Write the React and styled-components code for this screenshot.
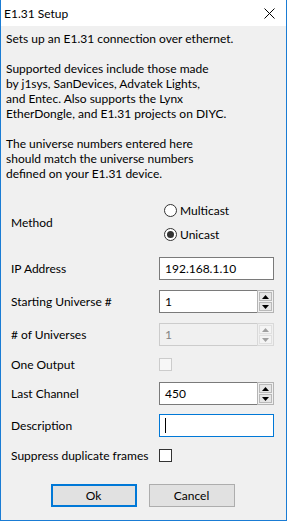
import React from "react";
import styled, { createGlobalStyle } from "styled-components";

const GlobalStyle = createGlobalStyle`
  html, body {
    margin: 0;
    padding: 0;
    background: #fff;
  }
`;

const App = () => {
  return (
    <>
      <GlobalStyle />
      <Window>
        <TitleBar>
          <Title>E1.31 Setup</Title>
          <CloseIcon width="11" height="11" viewBox="0 0 11 11">
            <path d="M0.5 0.5 L10.5 10.5 M10.5 0.5 L0.5 10.5" stroke="#000" strokeWidth="1" />
          </CloseIcon>
        </TitleBar>
        <Body>
          <Intro>
            <p>Sets up an E1.31 connection over ethernet.</p>
            <p>
              Supported devices include those made
              <br />
              by j1sys, SanDevices, Advatek Lights,
              <br />
              and Entec. Also supports the Lynx
              <br />
              EtherDongle, and E1.31 projects on DIYC.
            </p>
            <p>
              The universe numbers entered here
              <br />
              should match the universe numbers
              <br />
              defined on your E1.31 device.
            </p>
          </Intro>
          <Form>
            <MethodRow>
              <Label>Method</Label>
              <RadioGroup>
                <RadioOption>
                  <Radio />
                  Multicast
                </RadioOption>
                <RadioOption>
                  <Radio $checked />
                  Unicast
                </RadioOption>
              </RadioGroup>
            </MethodRow>
            <Row $h={33}>
              <Label>IP Address</Label>
              <TextBox>192.168.1.10</TextBox>
            </Row>
            <Row $h={33}>
              <Label>Starting Universe #</Label>
              <Spin value="1" />
            </Row>
            <Row $h={33}>
              <Label># of Universes</Label>
              <Spin value="1" disabled />
            </Row>
            <Row $h={27}>
              <Label>One Output</Label>
              <CheckBox $disabled />
            </Row>
            <Row $h={31}>
              <Label>Last Channel</Label>
              <Spin value="450" />
            </Row>
            <Row $h={33}>
              <Label>Description</Label>
              <TextBox $focused>
                <Caret />
              </TextBox>
            </Row>
            <Row $h={27}>
              <Label>Suppress duplicate frames</Label>
              <CheckBox />
            </Row>
          </Form>
          <Buttons>
            <Button $default>Ok</Button>
            <Button>Cancel</Button>
          </Buttons>
        </Body>
      </Window>
    </>
  );
};

const Spin = ({ value, disabled }) => (
  <SpinBox>
    <SpinText $disabled={disabled}>{value}</SpinText>
    <SpinButtons $disabled={disabled}>
      <SpinButton $disabled={disabled}>
        <Arrow viewBox="0 0 7 4" width="7" height="4">
          <path d="M3.5 0 L7 4 L0 4 Z" fill={disabled ? "#a0a0a0" : "#000"} />
        </Arrow>
      </SpinButton>
      <SpinButton $disabled={disabled}>
        <Arrow viewBox="0 0 7 4" width="7" height="4">
          <path d="M0 0 L7 0 L3.5 4 Z" fill={disabled ? "#a0a0a0" : "#000"} />
        </Arrow>
      </SpinButton>
    </SpinButtons>
  </SpinBox>
);

const Window = styled.div`
  width: 287px;
  height: 521px;
  box-sizing: border-box;
  border: 1px solid #1a7cd4;
  border-top: 0;
  background: #f0f0f0;
  display: flex;
  flex-direction: column;
  font-family: Lato, "Noto Sans", sans-serif;
  font-size: 12px;
  color: #000;
`;
const TitleBar = styled.div`
  height: 26px;
  background: #fff;
  display: flex;
  align-items: center;
  justify-content: space-between;
  padding: 0 11px 0 3px;
`;
const Title = styled.span`
  font-size: 12px;
  line-height: 15px;
`;
const CloseIcon = styled.svg`
  display: block;
  margin-top: 1px;
`;
const Body = styled.div`
  flex: 1;
  padding: 5px 5px 0 5px;
  display: flex;
  flex-direction: column;
`;
const Intro = styled.div`
  line-height: 15px;
  p {
    margin: 0 0 15px 0;
  }
  p:last-child {
    margin-bottom: 0;
  }
`;
const Form = styled.div`
  margin: 17px 0 0 5px;
  display: flex;
  flex-direction: column;
`;
const Row = styled.div`
  height: ${(p) => p.$h}px;
  display: flex;
  align-items: center;
`;
const MethodRow = styled(Row)`
  height: 48px;
  margin-bottom: 6px;
`;
const Label = styled.div`
  width: 148px;
  flex: none;
  white-space: nowrap;
`;
const RadioGroup = styled.div`
  display: flex;
  flex-direction: column;
  margin-left: 5px;
`;
const RadioOption = styled.div`
  height: 24px;
  display: flex;
  align-items: center;
  gap: 3px;
`;
const Radio = styled.span`
  width: 13px;
  height: 13px;
  box-sizing: border-box;
  border: 1px solid #333;
  border-radius: 50%;
  background: #fff;
  display: flex;
  align-items: center;
  justify-content: center;
  &::after {
    content: "";
    width: 7px;
    height: 7px;
    border-radius: 50%;
    background: ${(p) => (p.$checked ? "#333" : "transparent")};
  }
`;
const TextBox = styled.div`
  width: 115px;
  height: 23px;
  box-sizing: border-box;
  border: 1px solid ${(p) => (p.$focused ? "#0078d7" : "#7a7a7a")};
  background: #fff;
  padding: 0 5px;
  display: flex;
  align-items: center;
`;
const Caret = styled.span`
  width: 1px;
  height: 15px;
  background: #000;
`;
const SpinBox = styled.div`
  width: 115px;
  height: 23px;
  display: flex;
`;
const SpinText = styled.div`
  flex: 1;
  box-sizing: border-box;
  border: 1px solid ${(p) => (p.$disabled ? "#cccccc" : "#7a7a7a")};
  border-right: 0;
  background: ${(p) => (p.$disabled ? "#f0f0f0" : "#fff")};
  color: ${(p) => (p.$disabled ? "#838383" : "#000")};
  padding: 0 5px;
  display: flex;
  align-items: center;
`;
const SpinButtons = styled.div`
  width: 17px;
  box-sizing: border-box;
  border: 1px solid ${(p) => (p.$disabled ? "#d9d9d9" : "#b4b4b4")};
  padding: 1px;
  display: flex;
  flex-direction: column;
  gap: 1px;
  background: #f0f0f0;
`;
const SpinButton = styled.div`
  flex: 1;
  box-sizing: border-box;
  border: 1px solid ${(p) => (p.$disabled ? "#e0e0e0" : "#b9b9b9")};
  background: ${(p) => (p.$disabled ? "#f4f4f4" : "#e6e6e6")};
  display: flex;
  align-items: center;
  justify-content: center;
`;
const Arrow = styled.svg`
  display: block;
`;
const CheckBox = styled.span`
  width: 13px;
  height: 13px;
  box-sizing: border-box;
  border: 1px solid ${(p) => (p.$disabled ? "#cccccc" : "#333")};
  background: ${(p) => (p.$disabled ? "#f7f7f7" : "#fff")};
`;
const Buttons = styled.div`
  display: flex;
  justify-content: center;
  gap: 12px;
  margin: 15px 0 0 -2px;
`;
const Button = styled.div`
  width: 86px;
  height: 23px;
  box-sizing: border-box;
  border: ${(p) => (p.$default ? "2px solid #0078d7" : "1px solid #adadad")};
  background: #e1e1e1;
  display: flex;
  align-items: center;
  justify-content: center;
`;

export default App;
